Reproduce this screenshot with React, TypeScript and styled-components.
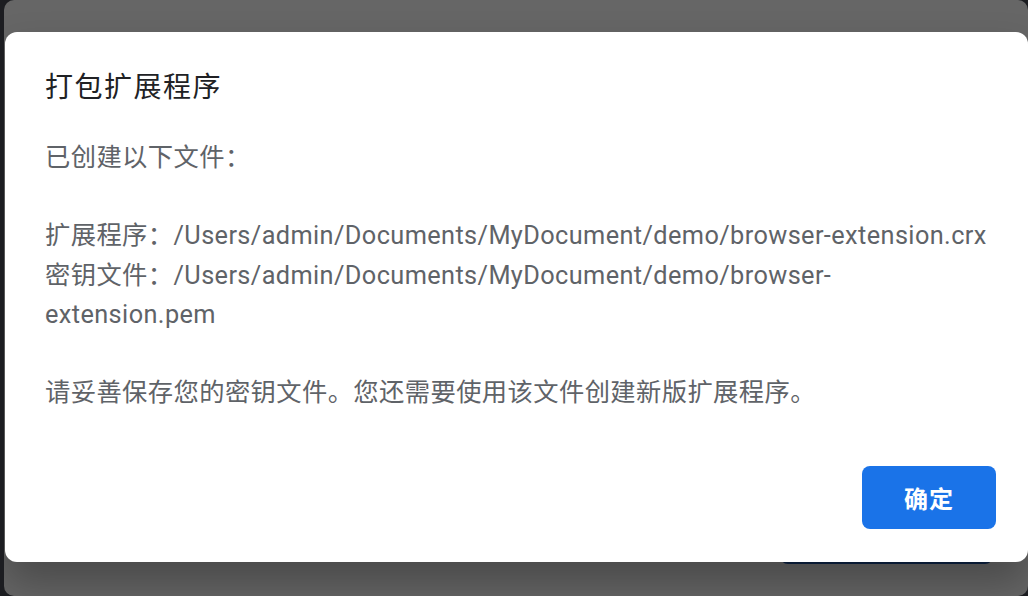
import React from "react";
import styled, { createGlobalStyle } from "styled-components";

const GlobalStyle = createGlobalStyle`
  html, body {
    margin: 0;
    padding: 0;
    background: #1c1d21;
    width: 1028px;
    height: 596px;
    overflow: hidden;
  }
  * { box-sizing: border-box; }
`;

export default function App() {
  return (
    <>
      <GlobalStyle />
      <Window>
        {/* page behind the modal */}
        <PageLayer>
          <PageFooter>
            <GhostButton />
          </PageFooter>
        </PageLayer>

        {/* modal */}
        <ModalLayer>
          <Dialog role="dialog" aria-labelledby="pack-title">
            <Title id="pack-title">打包扩展程序</Title>
            <Body>
              {"已创建以下文件：\n\n扩展程序：/Users/admin/Documents/MyDocument/demo/browser-extension.crx\n密钥文件：/Users/admin/Documents/MyDocument/demo/browser-extension.pem\n\n请妥善保存您的密钥文件。您还需要使用该文件创建新版扩展程序。"}
            </Body>
            <Footer>
              <PrimaryButton type="button">确定</PrimaryButton>
            </Footer>
          </Dialog>
        </ModalLayer>
      </Window>
    </>
  );
}

const Window = styled.div`
  margin-left: 4px;
  width: 1024px;
  height: 596px;
  border-radius: 10px;
  background: #666666;
  overflow: hidden;
  display: grid;
  grid-template: 1fr / 1fr;
  font-family: Roboto, "Noto Sans CJK SC", sans-serif;
`;

const PageLayer = styled.div`
  grid-area: 1 / 1;
  display: flex;
  flex-direction: column;
  justify-content: flex-start;
  padding-top: 500px;
`;

const PageFooter = styled.div`
  display: flex;
  justify-content: flex-end;
  padding-right: 35px;
`;

const GhostButton = styled.div`
  width: 213px;
  height: 64px;
  border-radius: 8px;
  background: #0c2344;
`;

const ModalLayer = styled.div`
  grid-area: 1 / 1;
  display: flex;
  flex-direction: column;
  align-items: stretch;
  padding: 32px 0 0 1px;
`;

const Dialog = styled.section`
  height: 530px;
  background: #ffffff;
  border-radius: 12px;
  box-shadow: 0 22px 40px rgba(0, 0, 0, 0.28);
  display: flex;
  flex-direction: column;
  padding: 0 32px 33px 40px;
`;

const Title = styled.h2`
  margin: 0;
  padding-top: 35px;
  font-size: 28px;
  line-height: 36px;
  font-weight: 400;
  letter-spacing: 1.5px;
  color: #202124;
  font-family: "Noto Sans CJK SC", sans-serif;
`;

const Body = styled.div`
  margin-top: 35px;
  padding-right: 6px;
  font-size: 25.3px;
  line-height: 39.2px;
  letter-spacing: 0.4px;
  color: #5f6368;
  white-space: pre-line;
  font-family: Roboto, "Noto Sans CJK SC", sans-serif;
`;

const Footer = styled.div`
  margin-top: auto;
  display: flex;
  justify-content: flex-end;
`;

const PrimaryButton = styled.button`
  width: 134px;
  height: 63px;
  border: none;
  border-radius: 8px;
  background: #1a73e8;
  color: #ffffff;
  font-family: "Noto Sans CJK SC", sans-serif;
  font-size: 24px;
  font-weight: 700;
  letter-spacing: 1px;
  cursor: pointer;
`;
